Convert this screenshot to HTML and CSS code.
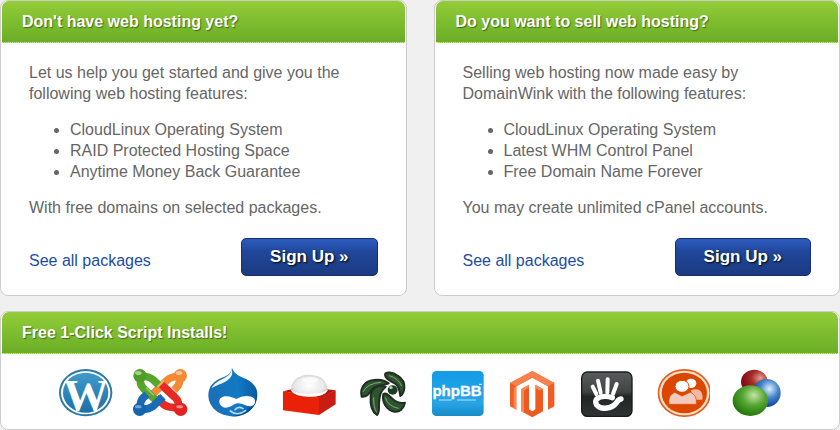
FILE: index.html
```html
<!DOCTYPE html>
<html lang="en">
<head>
<meta charset="utf-8">
<title>Web Hosting</title>
<link rel="stylesheet" href="styles.css">
</head>
<body>
<div class="plans">
   <div class="box">
      <h2>Don't have web hosting yet?</h2>
      <div class="content">
         <p>Let us help you get started and give you the following web hosting features:</p>
         <ul>
            <li>CloudLinux Operating System</li>
            <li>RAID Protected Hosting Space</li>
            <li>Anytime Money Back Guarantee</li>
         </ul>
         <p>With free domains on selected packages.</p>
         <div class="actions">
            <a href="#packages">See all packages</a>
            <button type="button">Sign Up »</button>
         </div>
      </div>
   </div>
   <div class="box">
      <h2>Do you want to sell web hosting?</h2>
      <div class="content">
         <p>Selling web hosting now made easy by DomainWink with the following features:</p>
         <ul>
            <li>CloudLinux Operating System</li>
            <li>Latest WHM Control Panel</li>
            <li>Free Domain Name Forever</li>
         </ul>
         <p>You may create unlimited cPanel accounts.</p>
         <div class="actions">
            <a href="#reseller">See all packages</a>
            <button type="button">Sign Up »</button>
         </div>
      </div>
   </div>
</div>

<div class="box">
   <h2>Free 1-Click Script Installs!</h2>
   <div class="scripts">
      <!-- WordPress -->
      <svg viewBox="21 21 168 162">
         <defs>
            <linearGradient id="wp" x1="0" y1="0" x2="0" y2="1"><stop offset="0" stop-color="#3f9bcb"/><stop offset="1" stop-color="#1e6fa6"/></linearGradient>
            <clipPath id="wpclip"><ellipse cx="107" cy="98" rx="73" ry="65"/></clipPath>
         </defs>
         <ellipse cx="107" cy="98" rx="80" ry="71" fill="#2c78a8"/>
         <ellipse cx="107" cy="98" rx="74" ry="65" fill="#fff"/>
         <ellipse cx="107" cy="98" rx="68" ry="60" fill="url(#wp)"/>
         <text class="wp" x="108" y="150" text-anchor="middle" clip-path="url(#wpclip)">W</text>
      </svg>
      <!-- Joomla -->
      <svg viewBox="245 21 168 162" fill="none" stroke-width="23" stroke-linejoin="round">
         <path d="M343 83L376 114Q388 126 383 143" stroke="#e52b23"/>
         <path d="M390 145L358 141Q346 140 335 129L318 112" stroke="#e52b23"/>
         <path d="M388 48Q391 71 378 83L371 90" stroke="#f58a36"/>
         <path d="M388 48Q362 50 351 60L308 101" stroke="#f58a36"/>
         <path d="M268 48Q296 48 308 59L325 75" stroke="#58a52b"/>
         <path d="M271 49Q266 73 280 86L315 119" stroke="#58a52b"/>
         <path d="M270 148Q267 125 280 112L290 103" stroke="#1b6ab4"/>
         <path d="M270 148Q296 149 309 138L338 110" stroke="#1b6ab4"/>
         <path d="M334 74L372 110" stroke="#e52b23"/>
         <g stroke="none">
            <ellipse cx="269" cy="47" rx="20" ry="20" fill="#4e9d29"/>
            <ellipse cx="390" cy="47" rx="20" ry="20" fill="#f58a36"/>
            <ellipse cx="268" cy="148" rx="20" ry="20" fill="#1764ae"/>
            <ellipse cx="391" cy="148" rx="20" ry="20" fill="#df2323"/>
            <ellipse cx="264" cy="39" rx="10" ry="6" fill="#a8d086"/>
            <ellipse cx="386" cy="39" rx="10" ry="6" fill="#ffc48d"/>
            <ellipse cx="264" cy="140" rx="10" ry="5" fill="#6ca6d8"/>
            <ellipse cx="388" cy="140" rx="10" ry="5" fill="#f28b80"/>
         </g>
         <path d="M321 80L340 62M287 83L311 106" stroke="#fff" stroke-opacity=".35" stroke-width="5"/>
      </svg>
      <!-- Drupal -->
      <svg viewBox="19 21 168 162">
         <defs><linearGradient id="dr" x1="0" y1="0" x2="1" y2="0"><stop offset="0" stop-color="#1a6fb4"/><stop offset=".6" stop-color="#1279c4"/><stop offset="1" stop-color="#0a5b9f"/></linearGradient></defs>
         <path d="M97 24C104 42 117 48 138 56C162 67 174 85 173 105C172 143 142 168 101 169C58 169 27 143 26 106C26 79 42 63 70 52C88 45 94 38 97 24Z" fill="url(#dr)"/>
         <path d="M95 28C94 41 86 49 70 56C50 65 41 74 36 84C56 72 82 68 94 50C99 43 99 35 95 28Z" fill="#eef5fa"/>
         <path d="M172 99C168 120 158 138 138 152C128 160 110 166 95 169C140 173 174 143 172 99Z" fill="#07508e"/>
         <path d="M110 117C127 106 151 104 163 115C171 126 163 139 150 139C137 138 125 127 112 130C101 132 94 143 77 143C62 141 54 126 62 115C73 103 98 110 110 117Z" fill="#fff"/>
         <path d="M92 153Q113 170 138 152M106 149Q116 137 130 146" fill="none" stroke="#b8d9f0" stroke-width="5" stroke-linecap="round"/>
      </svg>
      <!-- red box with a dome -->
      <svg viewBox="243 21 168 162">
         <defs><radialGradient id="dome" cx=".5" cy=".5" r=".6"><stop offset="0" stop-color="#fff"/><stop offset=".65" stop-color="#e9e9e9"/><stop offset="1" stop-color="#bdbdbd"/></radialGradient></defs>
         <path d="M249 94L276 88H380L407 91L357 115Z" fill="#b71510"/>
         <path d="M249 94L357 112V165L249 151Z" fill="#e82108"/>
         <path d="M357 112L407 91V133L357 165Z" fill="#c91c12"/>
         <path d="M273 92Q274 45 328 44Q381 46 383 92Q374 110 328 110Q281 109 273 92Z" fill="url(#dome)"/>
         <path d="M274 90Q290 102 328 102Q368 101 383 90Q374 110 328 110Q283 109 274 90Z" fill="#fff"/>
         <ellipse cx="330" cy="60" rx="26" ry="9" fill="#fff" opacity=".7"/>
      </svg>
      <!-- green swirl -->
      <svg viewBox="17 21 168 162">
         <g fill="#2c572d" stroke="#242a26" stroke-width="6" stroke-linejoin="round">
            <path d="M104 44C104 34 128 36 142 47C158 57 163 73 162 84C161 96 157 104 150 108C148 95 147 81 137 73C127 64 105 61 104 44Z"/>
            <path d="M34 110C27 84 44 63 70 60C88 57 104 61 115 70C98 77 82 75 70 84C58 94 54 113 34 110Z"/>
            <path d="M106 80C82 73 64 84 61 108C59 134 64 155 80 165C89 156 85 142 86 130C87 108 90 93 106 80Z"/>
            <path d="M99 102C94 126 108 150 132 155C147 158 161 145 164 128C148 131 137 127 126 116C116 107 108 97 99 102Z"/>
         </g>
         <path d="M117 47Q144 55 154 78M38 96Q50 70 92 67M70 112Q69 142 79 157M105 113Q114 140 145 145" fill="none" stroke="#83a57b" stroke-width="3"/>
         <ellipse cx="127" cy="90" rx="15" ry="14" fill="#1e3d27"/>
         <ellipse cx="122" cy="83" rx="5" ry="4" fill="#bdd5b5"/>
      </svg>
      <!-- phpBB -->
      <svg viewBox="241 21 168 162">
         <defs><linearGradient id="bb" x1="0" y1="0" x2="0" y2="1"><stop offset="0" stop-color="#149ce6"/><stop offset=".7" stop-color="#28a5e6"/><stop offset="1" stop-color="#178bca"/></linearGradient></defs>
         <rect x="247" y="33" width="155" height="135" rx="13" fill="url(#bb)"/>
         <text class="phpbb" x="322" y="109" text-anchor="middle">phpBB</text>
         <path d="M268 120H306M322 120H379" stroke="#bfe2f5" stroke-width="3"/>
         <path d="M388 73h8" stroke="#fff" stroke-width="3"/>
      </svg>
      <!-- Magento -->
      <svg viewBox="15 21 168 162">
         <path d="M97 33L163 69V139L144 149V79L97 53L49 79V149L30 139V69Z" fill="#f15d22"/>
         <path d="M97 33L163 69L144 79L97 53L49 79L30 69Z" fill="#f5824d"/>
         <path d="M64 87L87 74V148L97 154L106 148V74L129 87V154L97 172L64 154Z" fill="#f0591e"/>
         <path d="M64 87L87 74V82L72 92V158L64 154ZM106 74L129 87L120 92L106 84ZM49 79L41 84V145L49 149Z" fill="#f58a56"/>
      </svg>
      <!-- concrete5 -->
      <svg viewBox="239 21 168 162">
         <defs><linearGradient id="c5" x1="0" y1="0" x2="0" y2="1"><stop offset="0" stop-color="#595c5c"/><stop offset=".45" stop-color="#404342"/><stop offset=".55" stop-color="#222524"/><stop offset="1" stop-color="#303333"/></linearGradient></defs>
         <rect x="244" y="36" width="151" height="133" rx="17" fill="url(#c5)" stroke="#1a1c1c" stroke-width="4"/>
         <g fill="none" stroke="#fff" stroke-width="12" stroke-linecap="round">
            <path d="M277 80L288 102M293 62L301 98M322 58L321 98M349 72L338 102"/>
            <path d="M336 113Q318 106 299 111Q280 119 289 135Q302 150 329 142Q342 138 350 126Q355 118 362 117" stroke-width="16"/>
         </g>
      </svg>
      <!-- community -->
      <svg viewBox="13 21 168 162">
         <ellipse cx="104" cy="99" rx="80" ry="72" fill="#e65d20"/>
         <ellipse cx="104" cy="99" rx="75" ry="67" fill="#f8e2c9"/>
         <ellipse cx="104" cy="99" rx="68" ry="61" fill="#dc4700"/>
         <ellipse cx="124" cy="70" rx="16" ry="14" fill="#fff"/>
         <path d="M124 91Q138 84 150 91Q161 100 158 119H129Z" fill="#f3b89f"/>
         <ellipse cx="97" cy="79" rx="21" ry="18" fill="#fff" stroke="#dc4700" stroke-width="3"/>
         <path d="M58 133Q54 106 75 97L97 108L122 97Q143 105 140 133Z" fill="#f3cabb" stroke="#dc4700" stroke-width="2"/>
      </svg>
      <!-- three balls -->
      <svg viewBox="237 21 168 162">
         <defs>
            <radialGradient id="red" cx=".72" cy=".35" r=".65"><stop offset="0" stop-color="#dfa18b"/><stop offset=".5" stop-color="#a52d2b"/><stop offset="1" stop-color="#850d17"/></radialGradient>
            <radialGradient id="blue" cx=".6" cy=".35" r=".65"><stop offset="0" stop-color="#e3effb"/><stop offset=".5" stop-color="#4384cc"/><stop offset="1" stop-color="#143f91"/></radialGradient>
            <radialGradient id="green" cx=".6" cy=".33" r=".65"><stop offset="0" stop-color="#c4e5a4"/><stop offset=".5" stop-color="#56a632"/><stop offset="1" stop-color="#267a0b"/></radialGradient>
         </defs>
         <ellipse cx="313" cy="65" rx="40" ry="36" fill="url(#red)"/>
         <ellipse cx="350" cy="99" rx="42" ry="42" fill="url(#blue)"/>
         <ellipse cx="301" cy="122" rx="53" ry="46" fill="url(#green)"/>
      </svg>
   </div>
</div>
</body>
</html>
```
FILE: styles.css
```css
body{
   margin: 0;
   background-color: #f0f0f0;
   color: #666;
   font: 16px/21px "Liberation Sans", Arial, sans-serif;
}
.plans{
   display: grid;
   grid-template-columns: 1fr 1fr;
   gap: 27px;
   margin-bottom: 15px;
}
.box{
   background-color: #fff;
   border: 1px solid #ccc;
   border-radius: 8px;
   padding: 0 1px;
}
h2{
   margin: 0;
   padding: 0 20px;
   border-bottom: 1px dotted #c5e39a;
   border-radius: 7px 7px 0 0;
   background: linear-gradient(#93cd38, #6aad26);
   color: #fff;
   font-size: 16px;
   line-height: 41px;
   text-shadow: 1px 1px 1px #3f6f12;
}
.content{
   padding: 19px 27px;
}
p, ul{
   margin: 0 0 15px;
}
ul{
   padding-left: 41px;
}
.actions{
   display: flex;
   justify-content: space-between;
   align-items: center;
   margin-top: 20px;
}
a{
   color: #1c4da1;
   text-decoration: none;
   padding-top: 6px;
}
button{
   padding: 0 28px;
   border: 1px solid #14306f;
   border-radius: 5px;
   background: linear-gradient(#2c5cc0, #21479b 35%, #1b3a80);
   color: #fff;
   font: bold 17px/36px "Liberation Sans", Arial, sans-serif;
   text-shadow: 1px 1px 2px #000;
}
.scripts{
   display: flex;
   justify-content: space-between;
   padding: 13px 53px 8px 55px;
}
.scripts svg{
   width: 56px;
   height: 54px;
}
.wp{
   fill: #fff;
   font: bold 136px "Liberation Serif", serif;
}
.phpbb{
   fill: #fff;
   stroke: #fff;
   stroke-width: 1px;
   font: bold 45px "Liberation Sans", Arial, sans-serif;
}
```
